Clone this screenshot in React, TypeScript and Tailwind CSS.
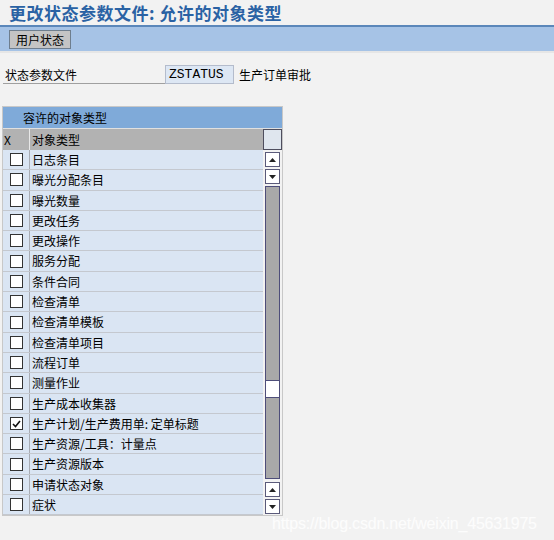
const rows: { label: string; checked?: boolean }[] = [
  { label: '日志条目' },
  { label: '曝光分配条目' },
  { label: '曝光数量' },
  { label: '更改任务' },
  { label: '更改操作' },
  { label: '服务分配' },
  { label: '条件合同' },
  { label: '检查清单' },
  { label: '检查清单模板' },
  { label: '检查清单项目' },
  { label: '流程订单' },
  { label: '测量作业' },
  { label: '生产成本收集器' },
  { label: '生产计划/生产费用单: 定单标题', checked: true },
  { label: '生产资源/工具：计量点' },
  { label: '生产资源版本' },
  { label: '申请状态对象' },
  { label: '症状' },
]

const font = { fontFamily: '"Noto Sans CJK SC", "Noto Sans", sans-serif' }

const ArrowBtn = ({ down }: { down?: boolean }) => (
  <div className="flex h-[15px] w-[15px] items-center justify-center border border-[#5a5a7a] bg-white">
    <svg width="7" height="4" viewBox="0 0 7 4">
      {down ? <path d="M0 0h7L3.5 4z" fill="#222" /> : <path d="M0 4h7L3.5 0z" fill="#222" />}
    </svg>
  </div>
)

const App = () => {
  return (
    <main className="relative h-[540px] w-[554px] overflow-hidden bg-[#f2f2f2] text-[12px] text-black" style={font}>
      <h1 className="h-[25px] pl-[9px] pt-[2px] text-[17px] font-semibold leading-[21px] tracking-[0.5px] text-[#2a62a4]">
        更改状态参数文件: 允许的对象类型
      </h1>
      <div className="h-[2px] bg-[#5b87ba]" />
      <div className="flex h-[26px] items-center border-b-2 border-[#e6e6e6] bg-[#a6c3e6] px-[9px]">
        <button className="h-[19px] border border-[#6e7e8e] bg-[#c4c4c4] px-[6px] text-[12px] leading-[17px]">用户状态</button>
      </div>

      <div className="mt-[12px] flex items-center">
        <div className="ml-[3px] h-[19px] w-[162px] border-b border-[#a0a0a0] pl-[2px] leading-[19px]">状态参数文件</div>
        <div className="h-[19px] w-[69px] border border-[#b4bccc] bg-[#dde7f4] pl-[3px] text-[13px] leading-[17px]" style={{ fontFamily: '"Liberation Mono", monospace' }}>
          ZSTATUS
        </div>
        <div className="ml-[5px] leading-[19px]">生产订单审批</div>
      </div>

      <section className="ml-[2px] mt-[22px] w-[281px] border border-[#c8c8c8] bg-[#f2f2f2]">
        <div className="h-[21px] bg-[#7faad9] pl-[20px] leading-[21px]">容许的对象类型</div>
        <div className="flex h-[22px] border-t border-[#e0e0e0]">
          <div className="w-[27px] border-r border-[#e8e8e8] bg-[#b2b2b2] pl-[1px] leading-[21px]">X</div>
          <div className="flex-1 bg-[#b2b2b2] pl-[2px] leading-[21px]">对象类型</div>
          <div className="w-[19px] border border-[#4e4e5e] bg-[#dfe6ee]" />
        </div>
        <div className="flex">
          <div className="flex-1">
            {rows.map((r) => (
              <div key={r.label} className="flex h-[20.3px] border-b border-[#c4c8cf] bg-[#dae5f3]">
                <div className="flex w-[27px] items-center justify-center border-r border-[#a8acb4]">
                  <div className="flex h-[13px] w-[13px] items-center justify-center border border-[#333] bg-white">
                    {r.checked && (
                      <svg width="9" height="8" viewBox="0 0 9 8">
                        <path d="M1 4l2.5 2.5L8 1" stroke="#111" strokeWidth="1.6" fill="none" />
                      </svg>
                    )}
                  </div>
                </div>
                <div className="flex-1 pl-[2px] leading-[19px]">{r.label}</div>
              </div>
            ))}
          </div>
          <div className="flex w-[19px] flex-col items-center bg-[#f2f2f2] pt-[2px]">
            <ArrowBtn />
            <div className="mt-[2px]"><ArrowBtn down /></div>
            <div className="mt-[2px] h-[195px] w-[15px] border border-[#4e4e7a] bg-[#a9a9a9]" />
            <div className="h-[16px] w-[15px] border-x border-[#4e4e7a] bg-white" />
            <div className="h-[82px] w-[15px] border border-[#4e4e7a] bg-[#a9a9a9]" />
            <div className="mt-[3px]"><ArrowBtn /></div>
            <div className="mt-[2px]"><ArrowBtn down /></div>
          </div>
        </div>
      </section>

      <div className="absolute left-[272px] top-[512px] text-[16px] tracking-[-0.2px] text-white/80" style={{ fontFamily: '"Liberation Sans", sans-serif' }}>
        https://blog.csdn.net/weixin_45631975
      </div>
    </main>
  )
}

export default App
